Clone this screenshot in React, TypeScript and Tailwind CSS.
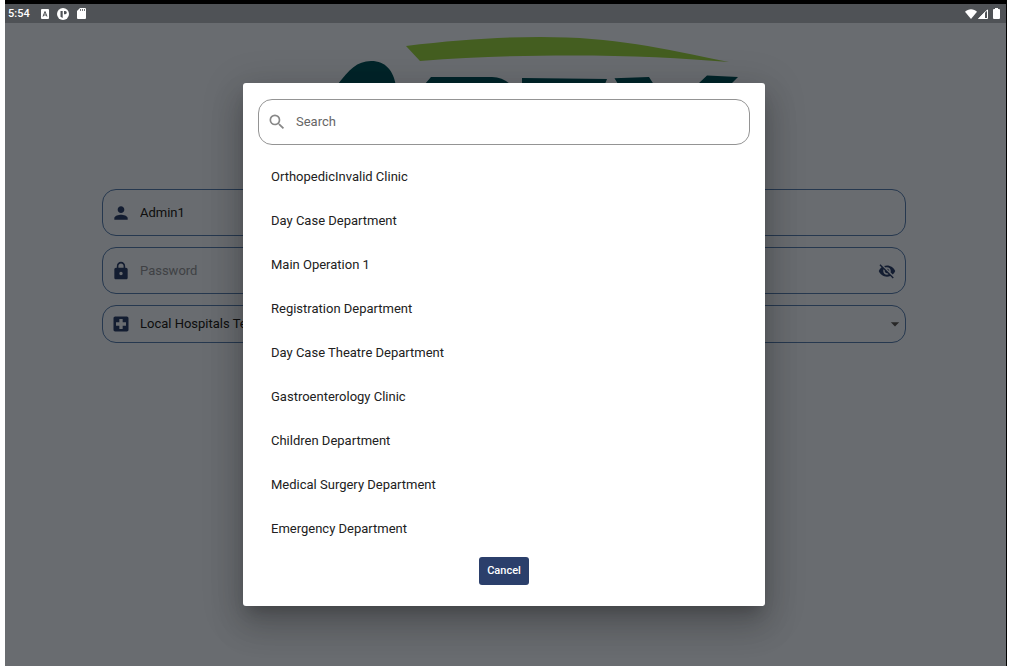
import type { ReactNode } from "react";
import {
  MdArrowDropDown,
  MdLocalHospital,
  MdLock,
  MdPerson,
  MdSearch,
  MdVisibilityOff,
} from "react-icons/md";

const departments = [
  "OrthopedicInvalid Clinic",
  "Day Case Department",
  "Main Operation 1",
  "Registration Department",
  "Day Case Theatre Department",
  "Gastroenterology Clinic",
  "Children Department",
  "Medical Surgery Department",
  "Emergency Department",
];

function StatusBar() {
  return (
    <header className="flex h-[19px] items-center justify-between bg-[#4f5256] pr-1.5 pl-[3px] text-white">
      <div className="flex items-center">
        <span className="w-[33px] text-[11px] leading-4 font-medium">5:54</span>
        <svg className="h-[10px] w-2" viewBox="0 0 8 10" aria-hidden="true">
          <rect width="8" height="10" rx="1" fill="currentColor" />
          <path d="M2 7.5 4 2.5 6 7.5M2.7 6h2.6" fill="none" stroke="#4f5256" />
        </svg>
        <svg className="ml-2 h-3 w-3" viewBox="0 0 12 12" aria-hidden="true">
          <circle cx="6" cy="6" r="6" fill="currentColor" />
          <path d="M3.500 3h2.200v7L3.500 8.800z" fill="#4f5256" />
          <path d="M7 3h1.200a1.600 1.600 0 0 1 0 3.200H7z" fill="#4f5256" />
        </svg>
        <svg className="ml-2 h-[11px] w-[9px]" viewBox="0 0 9 11" aria-hidden="true">
          <path d="M3 0h5a1 1 0 0 1 1 1v9a1 1 0 0 1-1 1H1a1 1 0 0 1-1-1V3z" fill="currentColor" />
          <path d="M3.5 1v2M5.5 1v2M7.5 1v2" stroke="#4f5256" strokeWidth=".8" />
        </svg>
      </div>
      <div className="flex items-center">
        <svg className="h-[10px] w-3" viewBox="0 0 12 10" aria-hidden="true">
          <path d="M6 10 0 2.8C3 -.6 9 -.6 12 2.8z" fill="currentColor" />
        </svg>
        <svg className="ml-px h-[10px] w-[10px]" viewBox="0 0 10 10" aria-hidden="true">
          <path d="M9.5 .8V9.5H.8z" fill="none" stroke="currentColor" />
          <path d="M7 2.8V10H0z" fill="currentColor" />
        </svg>
        <svg className="ml-[5px] h-[11px] w-[7px]" viewBox="0 0 7 11" aria-hidden="true">
          <path d="M2 0h3v1h1a1 1 0 0 1 1 1v8a1 1 0 0 1-1 1H1a1 1 0 0 1-1-1V2a1 1 0 0 1 1-1h1z" fill="currentColor" />
        </svg>
      </div>
    </header>
  );
}

function Logo() {
  return (
    <svg className="h-[140px] w-[410px]" viewBox="332 35 410 140" role="img" aria-label="Apex">
      <path d="M406 46C455 40 500 37 540 37C615 37 660 48 729 62C650 55 540 52 420 61z" fill="#94cc46" />
      <g fill="#005059">
        <path d="M338 84C349 70 357 61 371 61C386 61 393 71 395.500 84z" />
        <path d="M425 84 431 77H492Q502 77 510 84z" />
        <path d="M522 84V78L607 79 605 84z" />
        <path d="M618 84 614.500 78.300 649 77 653.500 84zM698 84 707 75.500 738 77 731 84z" />
      </g>
    </svg>
  );
}

function Field({ className, icon, children }: { className: string; icon: ReactNode; children: ReactNode }) {
  return (
    <label
      className={`flex items-center rounded-[14px] border border-[#537aac] pl-2 text-[13px] text-[#222] ${className}`}
    >
      <span className="mr-[9px] text-[#2b3f6b]">{icon}</span>
      {children}
    </label>
  );
}

function LoginForm() {
  return (
    <form className="flex flex-col gap-[11px]">
      <Field className="h-[47px]" icon={<MdPerson size={20} />}>
        <input aria-label="Username" defaultValue="Admin1" className="min-w-0 flex-1 bg-transparent outline-none" />
      </Field>
      <Field className="h-[47px]" icon={<MdLock size={20} />}>
        <input
          type="password"
          aria-label="Password"
          placeholder="Password"
          className="min-w-0 flex-1 bg-transparent outline-none placeholder:text-[#8b8f96]"
        />
        <button type="button" aria-label="Show password" className="mr-[9px] text-[#2b3f6b]">
          <MdVisibilityOff size={18} />
        </button>
      </Field>
      <Field className="h-[38px]" icon={<MdLocalHospital size={20} />}>
        <select aria-label="Hospital" className="min-w-0 flex-1 appearance-none bg-transparent outline-none">
          <option>Local Hospitals Test</option>
        </select>
        <MdArrowDropDown size={20} className="text-[#555]" />
      </Field>
    </form>
  );
}

function DepartmentDialog() {
  return (
    <div
      role="dialog"
      aria-modal="true"
      aria-label="Select department"
      className="flex w-[522px] flex-col rounded-[3px] bg-white px-[15px] pt-4 pb-[21px] shadow-[0_10px_14px_-6px_rgba(0,0,0,0.2),0_20px_32px_3px_rgba(0,0,0,0.14),0_8px_38px_7px_rgba(0,0,0,0.12)]"
    >
      <label className="flex h-[46px] items-center rounded-[14px] border border-[#949494] pl-2 text-[13px]">
        <MdSearch size={20} className="mr-[9px] text-[#888]" />
        <input
          type="text"
          aria-label="Search"
          placeholder="Search"
          className="min-w-0 flex-1 bg-transparent outline-none placeholder:text-[#666]"
        />
      </label>
      <ul className="mt-2.5">
        {departments.map((name) => (
          <li key={name}>
            <button type="button" className="flex h-11 w-full items-center px-[13px] text-left text-[13px] text-[#212121]">
              {name}
            </button>
          </li>
        ))}
      </ul>
      <button
        type="button"
        className="mt-1.5 h-7 self-center rounded-[3px] bg-[#2b3f6b] px-2 text-[11px] leading-4 font-medium text-white"
      >
        Cancel
      </button>
    </div>
  );
}

export default function App() {
  return (
    <div className="h-screen bg-white pr-[5px] pb-px pl-[5px] font-[Roboto,sans-serif]">
      <div className="flex h-full flex-col border-t-4 border-r border-black">
        <StatusBar />
        <div className="relative flex-1 bg-[#e4ebf3]">
          <main className="flex flex-col pt-3 pr-[100px] pl-[97px]">
            <div className="mb-3.5 flex justify-center pl-[66px]">
              <Logo />
            </div>
            <LoginForm />
          </main>
          <div className="absolute inset-0 flex items-start justify-center overflow-hidden bg-black/54 pt-[60px] pr-[3px]">
            <DepartmentDialog />
          </div>
        </div>
      </div>
    </div>
  );
}
